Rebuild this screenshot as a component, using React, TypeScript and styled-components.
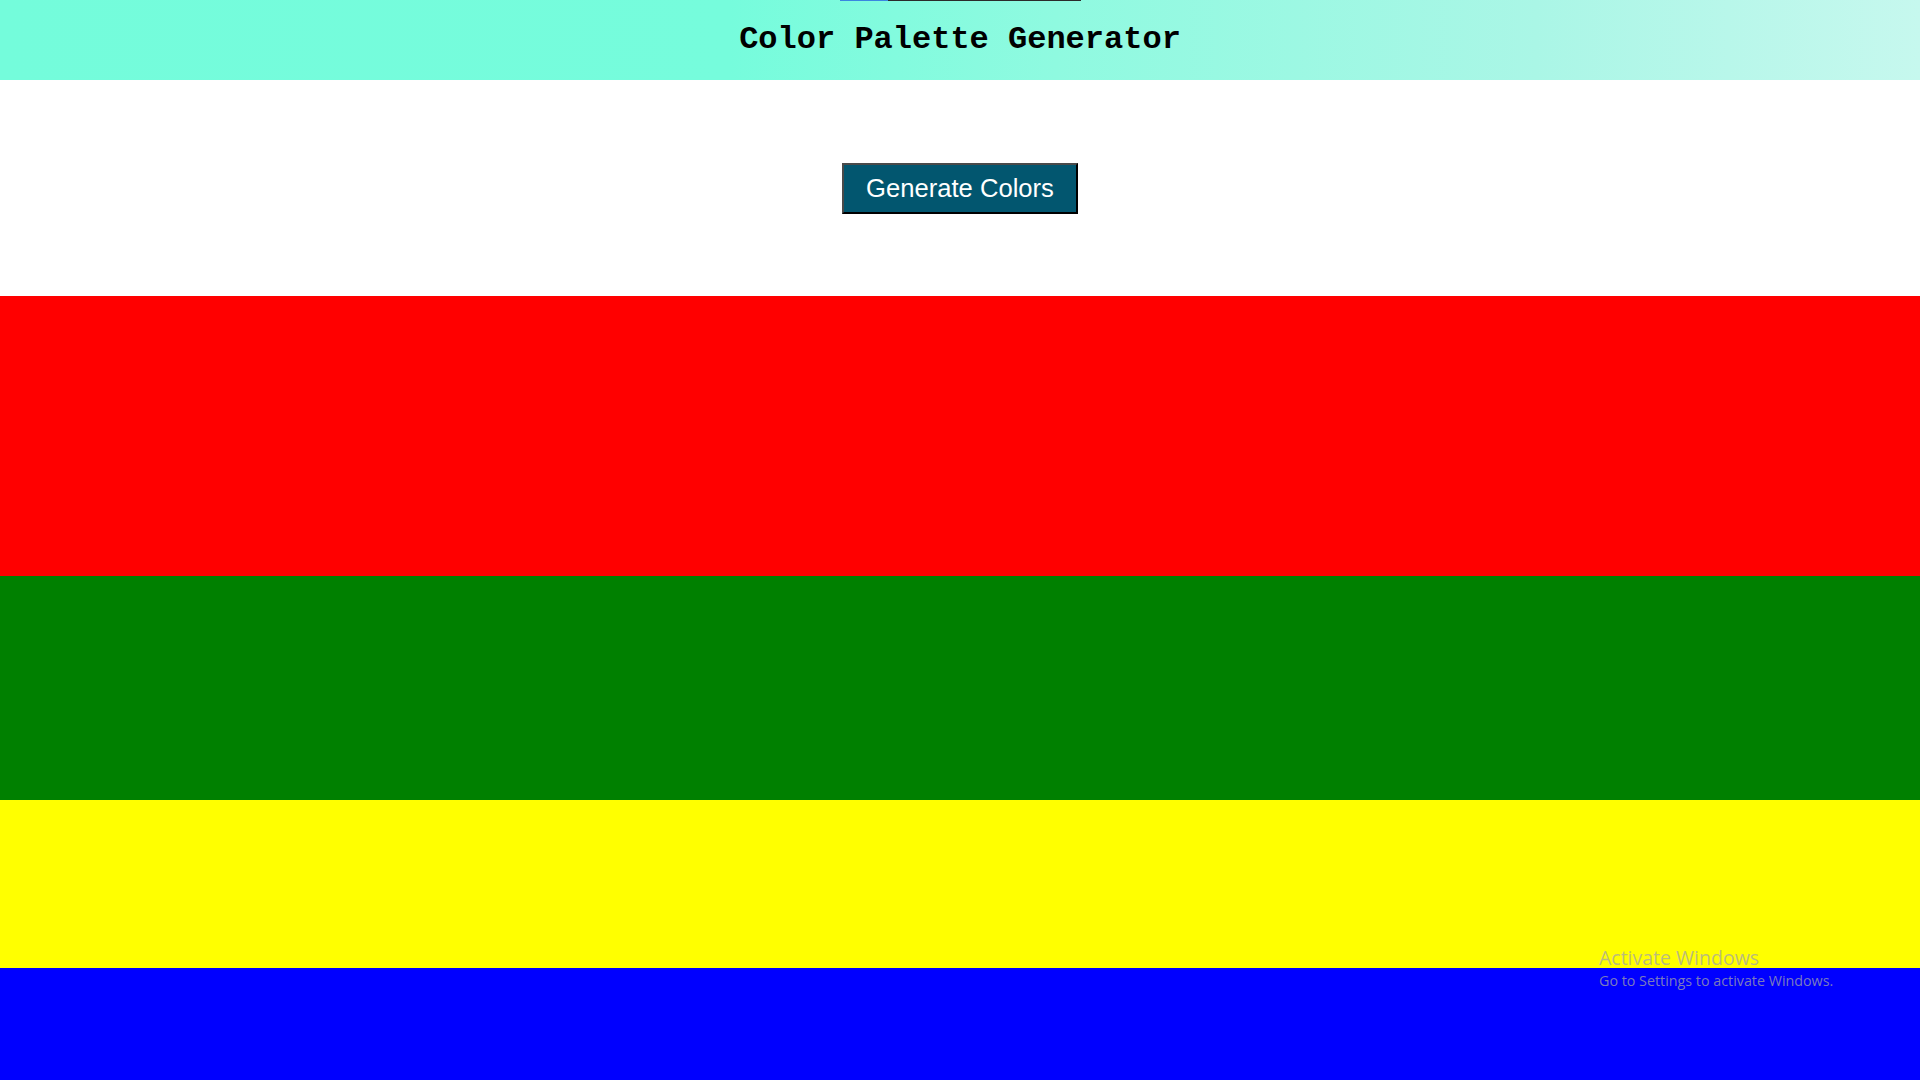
import React from "react";
import styled, { createGlobalStyle } from "styled-components";

const GlobalStyle = createGlobalStyle`
  html, body {
    margin: 0;
    padding: 0;
    background: #ffffff;
    overflow: hidden;
  }
  * { box-sizing: border-box; }
`;

const Page = styled.div`
  width: 1920px;
  height: 1080px;
  display: flex;
  flex-direction: column;
  position: relative;
`;

const Header = styled.header`
  height: 80px;
  display: flex;
  flex-direction: column;
  align-items: center;
  background: linear-gradient(90deg, #74fcdb 0%, #76fcdc 38%, #8ffae0 55%, #aaf6e6 80%, #c6f8ee 100%);
`;

const TopLine = styled.div`
  width: 241px;
  height: 1px;
  display: flex;
`;

const LineSegment = styled.div<{ $color: string; $width: string }>`
  width: ${(p) => p.$width};
  height: 100%;
  background: ${(p) => p.$color};
`;

const TitleWrap = styled.div`
  flex: 1;
  display: flex;
  align-items: center;
  justify-content: center;
  padding-bottom: 2px;
`;

const Title = styled.h1`
  margin: 0;
  font-family: "Liberation Mono", "Courier New", monospace;
  font-size: 32px;
  font-weight: bold;
  color: #000;
`;

const Controls = styled.section`
  height: 216px;
  display: flex;
  align-items: center;
  justify-content: center;
`;

const GenerateButton = styled.button`
  font-family: "Liberation Sans", Arial, sans-serif;
  font-size: 25.6px;
  color: #ffffff;
  background: #02566f;
  padding: 9px 22px;
  border-style: solid;
  border-width: 2px;
  border-color: #4a4a4a #000000 #000000 #4a4a4a;
  cursor: pointer;
  line-height: normal;
`;

const Palette = styled.div`
  flex: 1;
  display: flex;
  flex-direction: column;
`;

const Swatch = styled.div<{ $color: string; $height: number }>`
  height: ${(p) => p.$height}px;
  background: ${(p) => p.$color};
  flex-shrink: 0;
`;

const Watermark = styled.div`
  position: absolute;
  left: 1599px;
  top: 945px;
  font-family: "Open Sans", "Noto Sans", sans-serif;
  color: rgba(165, 165, 165, 0.75);
  pointer-events: none;
`;

const WatermarkTitle = styled.div`
  font-size: 19.5px;
  line-height: 26px;
`;

const WatermarkSub = styled.div`
  font-size: 14.3px;
  line-height: 19px;
`;

const colors = [
  { color: "#ff0000", height: 280 },
  { color: "#008000", height: 224 },
  { color: "#ffff00", height: 168 },
  { color: "#0000ff", height: 112 },
];

export default function App() {
  return (
    <>
      <GlobalStyle />
      <Page>
        <Header>
          <TopLine>
            <LineSegment $color="#3a86e0" $width="48px" />
            <LineSegment $color="#2b2b2b" $width="193px" />
          </TopLine>
          <TitleWrap>
            <Title>Color Palette Generator</Title>
          </TitleWrap>
        </Header>
        <Controls>
          <GenerateButton>Generate Colors</GenerateButton>
        </Controls>
        <Palette>
          {colors.map((c) => (
            <Swatch key={c.color} $color={c.color} $height={c.height} />
          ))}
        </Palette>
        <Watermark>
          <WatermarkTitle>Activate Windows</WatermarkTitle>
          <WatermarkSub>Go to Settings to activate Windows.</WatermarkSub>
        </Watermark>
      </Page>
    </>
  );
}
